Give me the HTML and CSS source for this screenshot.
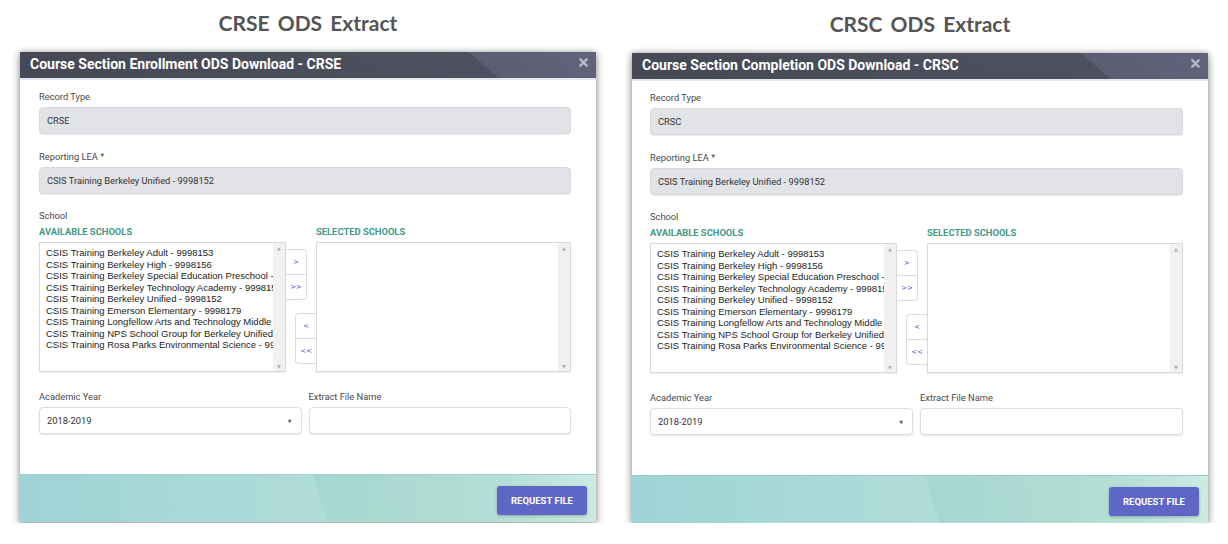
FILE: index.html
```html
<!DOCTYPE html>
<html>
<head>
<meta charset="utf-8">
<link rel="stylesheet" href="styles.css">
</head>
<body>
<div class="page">
  <section class="col">
    <h1 class="extract-title">CRSE ODS Extract</h1>
    <div class="dialog">
      <div class="dlg-head">
        <span class="dlg-title">Course Section Enrollment ODS Download - CRSE</span>
        <svg class="close" viewBox="0 0 10 10" width="9" height="9"><path d="M1.5 1.5 L8.5 8.5 M8.5 1.5 L1.5 8.5" stroke="#b9bac3" stroke-width="2.6" stroke-linecap="round"/></svg>
      </div>
      <div class="dlg-body">
        <div class="field">
          <div class="lbl">Record Type</div>
          <div class="ro">CRSE</div>
        </div>
        <div class="field">
          <div class="lbl">Reporting LEA *</div>
          <div class="ro">CSIS Training Berkeley Unified - 9998152</div>
        </div>
        <div class="field school">
          <div class="lbl">School</div>
          <div class="dual">
            <div class="pane">
              <div class="pane-title">AVAILABLE SCHOOLS</div>
              <div class="listbox">
                <ul class="items">
                  <li>CSIS Training Berkeley Adult - 9998153</li>
                  <li>CSIS Training Berkeley High - 9998156</li>
                  <li>CSIS Training Berkeley Special Education Preschool - 9998160</li>
                  <li>CSIS Training Berkeley Technology Academy - 9998157</li>
                  <li>CSIS Training Berkeley Unified - 9998152</li>
                  <li>CSIS Training Emerson Elementary - 9998179</li>
                  <li>CSIS Training Longfellow Arts and Technology Middle - 9998170</li>
                  <li>CSIS Training NPS School Group for Berkeley Unified - 9998199</li>
                  <li>CSIS Training Rosa Parks Environmental Science - 9998181</li>
                </ul>
                <div class="sb"><span>&#9650;</span><span>&#9660;</span></div>
              </div>
            </div>
            <div class="movers">
              <div class="grp grp-top"><div class="mv">&gt;</div><div class="mv">&gt;&gt;</div></div>
              <div class="grp grp-bot"><div class="mv">&lt;</div><div class="mv">&lt;&lt;</div></div>
            </div>
            <div class="pane">
              <div class="pane-title">SELECTED SCHOOLS</div>
              <div class="listbox">
                <ul class="items"></ul>
                <div class="sb"><span>&#9650;</span><span>&#9660;</span></div>
              </div>
            </div>
          </div>
        </div>
        <div class="row2">
          <div class="field">
            <div class="lbl">Academic Year</div>
            <div class="sel">2018-2019<span class="caret">&#9660;</span></div>
          </div>
          <div class="field">
            <div class="lbl">Extract File Name</div>
            <div class="txt"></div>
          </div>
        </div>
      </div>
      <div class="dlg-foot"><div class="req">REQUEST FILE</div></div>
    </div>
  </section>

  <section class="col col-right">
    <h1 class="extract-title">CRSC ODS Extract</h1>
    <div class="dialog">
      <div class="dlg-head">
        <span class="dlg-title">Course Section Completion ODS Download - CRSC</span>
        <svg class="close" viewBox="0 0 10 10" width="9" height="9"><path d="M1.5 1.5 L8.5 8.5 M8.5 1.5 L1.5 8.5" stroke="#b9bac3" stroke-width="2.6" stroke-linecap="round"/></svg>
      </div>
      <div class="dlg-body">
        <div class="field">
          <div class="lbl">Record Type</div>
          <div class="ro">CRSC</div>
        </div>
        <div class="field">
          <div class="lbl">Reporting LEA *</div>
          <div class="ro">CSIS Training Berkeley Unified - 9998152</div>
        </div>
        <div class="field school">
          <div class="lbl">School</div>
          <div class="dual">
            <div class="pane">
              <div class="pane-title">AVAILABLE SCHOOLS</div>
              <div class="listbox">
                <ul class="items">
                  <li>CSIS Training Berkeley Adult - 9998153</li>
                  <li>CSIS Training Berkeley High - 9998156</li>
                  <li>CSIS Training Berkeley Special Education Preschool - 9998160</li>
                  <li>CSIS Training Berkeley Technology Academy - 9998157</li>
                  <li>CSIS Training Berkeley Unified - 9998152</li>
                  <li>CSIS Training Emerson Elementary - 9998179</li>
                  <li>CSIS Training Longfellow Arts and Technology Middle - 9998170</li>
                  <li>CSIS Training NPS School Group for Berkeley Unified - 9998199</li>
                  <li>CSIS Training Rosa Parks Environmental Science - 9998181</li>
                </ul>
                <div class="sb"><span>&#9650;</span><span>&#9660;</span></div>
              </div>
            </div>
            <div class="movers">
              <div class="grp grp-top"><div class="mv">&gt;</div><div class="mv">&gt;&gt;</div></div>
              <div class="grp grp-bot"><div class="mv">&lt;</div><div class="mv">&lt;&lt;</div></div>
            </div>
            <div class="pane">
              <div class="pane-title">SELECTED SCHOOLS</div>
              <div class="listbox">
                <ul class="items"></ul>
                <div class="sb"><span>&#9650;</span><span>&#9660;</span></div>
              </div>
            </div>
          </div>
        </div>
        <div class="row2">
          <div class="field">
            <div class="lbl">Academic Year</div>
            <div class="sel">2018-2019<span class="caret">&#9660;</span></div>
          </div>
          <div class="field">
            <div class="lbl">Extract File Name</div>
            <div class="txt"></div>
          </div>
        </div>
      </div>
      <div class="dlg-foot"><div class="req">REQUEST FILE</div></div>
    </div>
  </section>
</div>
</body>
</html>
```

FILE: styles.css
```css
* { box-sizing: border-box; }
html, body { margin: 0; padding: 0; background: #ffffff; }
body { font-family: Roboto, "Liberation Sans", sans-serif; color: #444; }

.page {
  display: flex;
  gap: 36px;
  padding: 10px 20px 0 20px;
}
.col { width: 576px; display: flex; flex-direction: column; }
.col-right { padding-top: 1px; }
.col-right .dlg-body { padding-left: 18px; }

.extract-title {
  margin: 0;
  height: 42px;
  font-family: Lato, "Open Sans", sans-serif;
  font-weight: 700;
  font-size: 21px;
  line-height: 26px;
  word-spacing: 3px;
  color: #555555;
  text-align: center;
}

.dialog {
  background: #fff;
  box-shadow: 0 0 6px rgba(0,0,0,0.30), 0 3px 9px rgba(0,0,0,0.28);
}

.dlg-head {
  height: 28px;
  display: flex;
  align-items: center;
  justify-content: space-between;
  padding: 0 8px 2px 10px;
  background: linear-gradient(41deg, #464955 0%, #4d505e 79%, #5b5e72 79%, #60637a 100%);
  border-bottom: 2px solid #e6e7ec;
}
.dlg-title {
  color: #fff;
  font-weight: 700;
  font-size: 14px;
  letter-spacing: 0;
  white-space: nowrap;
}
.close { display: block; margin-top: -4px; }

.dlg-body {
  padding: 11px 25px 40px 19px;
}
.field { display: flex; flex-direction: column; }
.field + .field { margin-top: 17px; }
.lbl {
  height: 12px;
  line-height: 12px;
  font-size: 9.3px;
  color: #4a4a4a;
  margin-bottom: 4px;
}
.ro {
  height: 27px;
  line-height: 25px;
  background: #e2e3e7;
  border: 1px solid #d8d9de;
  border-radius: 4px;
  box-shadow: 0 1px 1px rgba(0,0,0,0.08);
  padding-left: 7px;
  font-size: 9.3px;
  color: #333;
}

.field.school { margin-top: 16px; }
.dual {
  display: grid;
  grid-template-columns: 247px 30px 1fr;
}
.pane { display: flex; flex-direction: column; }
.pane-title {
  height: 12px;
  line-height: 12px;
  font-size: 9.4px;
  font-weight: 700;
  color: #3f9a88;
  margin-bottom: 4px;
}
.listbox {
  height: 130px;
  border: 1px solid #d6d9dd;
  display: flex;
  background: #fff;
  box-shadow: 0 1px 1px rgba(0,0,0,0.06);
}
.items {
  flex: 1;
  margin: 0;
  padding: 4px 0 0 6px;
  list-style: none;
  overflow: hidden;
  font-family: "Liberation Sans", Arial, sans-serif;
  font-size: 9.5px;
  line-height: 11.5px;
  color: #222;
}
.items li { white-space: nowrap; }
.sb {
  width: 12px;
  background: #f1f1f1;
  display: flex;
  flex-direction: column;
  justify-content: space-between;
  align-items: center;
  padding: 3px 0 2px;
  font-family: "DejaVu Sans", sans-serif;
  font-size: 4.5px;
  color: #a8a8a8;
}

.movers {
  display: flex;
  flex-direction: column;
  padding-top: 23px;
}
.grp { display: flex; flex-direction: column; width: 21px; }
.grp-top { align-self: flex-start; }
.grp-bot { align-self: flex-end; margin-top: 13px; }
.mv {
  height: 26px;
  display: flex;
  align-items: center;
  justify-content: center;
  background: #fff;
  border: 1px solid #d9dce1;
  font-family: "DejaVu Sans", sans-serif;
  font-size: 7px;
  color: #4857c9;
}
.mv + .mv { margin-top: -1px; }
.grp-top .mv { border-left: none; }
.grp-top .mv:first-child { border-top-right-radius: 4px; }
.grp-top .mv:last-child { border-bottom-right-radius: 4px; }
.grp-bot .mv { border-right: none; }
.grp-bot .mv:first-child { border-top-left-radius: 4px; }
.grp-bot .mv:last-child { border-bottom-left-radius: 4px; }

.row2 {
  display: grid;
  grid-template-columns: 1fr 1fr;
  column-gap: 7px;
  margin-top: 19px;
}
.row2 .field + .field { margin-top: 0; }
.sel, .txt {
  height: 27px;
  border: 1px solid #dcdde1;
  border-radius: 4px;
  background: #fff;
  box-shadow: 0 1px 2px rgba(0,0,0,0.10);
}
.sel {
  display: flex;
  align-items: center;
  justify-content: space-between;
  padding: 0 9px 0 7px;
  font-size: 9.3px;
  color: #333;
}
.caret {
  font-family: "DejaVu Sans", sans-serif;
  font-size: 5px;
  color: #666;
}

.dlg-foot {
  height: 48px;
  display: flex;
  justify-content: flex-end;
  align-items: flex-start;
  padding: 11px 9px 0 0;
  background:
    linear-gradient(74deg, rgba(255,255,255,0) 0%, rgba(255,255,255,0) 52%, rgba(120,190,170,0.18) 52.2%, rgba(120,190,170,0.10) 85%, rgba(255,255,255,0.15) 100%),
    linear-gradient(90deg, #9fd3d6 0%, #aedbd8 45%, #b8e0d9 75%, #c4e7de 100%);
  border-top: 1px solid #9fcfcf;
}
.req {
  width: 90px;
  height: 29px;
  line-height: 29px;
  text-align: center;
  background: #5f67c6;
  border-radius: 3px;
  box-shadow: 0 1px 3px rgba(0,0,0,0.25);
  color: #fff;
  font-weight: 700;
  font-size: 9.5px;
}
```
